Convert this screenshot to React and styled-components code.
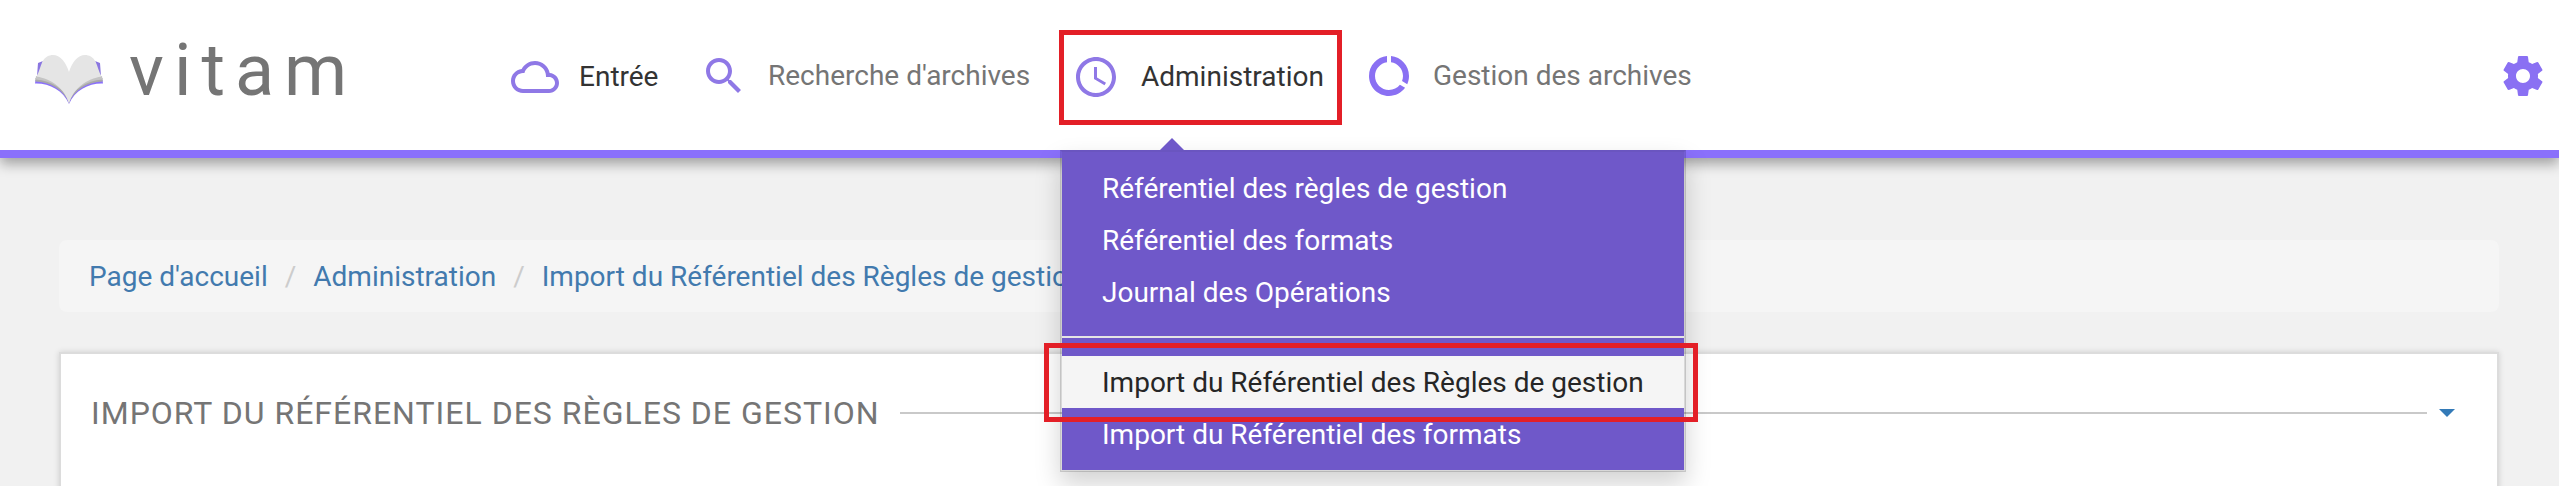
import React from "react";
import styled, { createGlobalStyle, css } from "styled-components";

const Global = createGlobalStyle`
  * { box-sizing: border-box; }
  html, body { height: 100%; }
  body {
    margin: 0;
    background: #f1f1f1;
    font-family: Roboto, "Liberation Sans", sans-serif;
    font-size: 28px;
    line-height: 40px;
    color: #757575;
    overflow: hidden;
  }
`;

const Page = styled.div`
  height: 486px;
  overflow: hidden;
`;

const Header = styled.header`
  position: relative;
  z-index: 2;
  display: flex;
  align-items: flex-start;
  height: 158px;
  background: #fff;
  border-bottom: 8px solid #8a70fb;
  box-shadow: 0 6px 12px rgba(0, 0, 0, 0.33);
`;

const Brand = styled.a`
  display: flex;
  align-items: flex-start;
  width: 511px;
  padding: 29px 0 0 35px;
`;

const Mark = styled.svg`
  width: 68px;
  height: 50px;
  margin-top: 25px;
`;

const Wordmark = styled.span`
  margin-left: 26px;
  font-size: 72px;
  line-height: 84px;
  letter-spacing: 10px;
  color: #757575;
`;

const Nav = styled.nav`
  display: flex;
  flex: 1;
  align-items: flex-start;
`;

const Entry = styled.div`
  position: relative;
  display: flex;
  align-items: center;
  height: 48px;
  margin-top: ${(p) => (p.$active ? 53 : 52)}px;
  margin-right: ${(p) => p.$after}px;
  color: ${(p) => (p.$active ? "#333" : "#757575")};
`;

const Icon = styled.svg`
  flex: none;
  width: 48px;
  height: 48px;
  fill: ${(p) => (p.$soft ? "#8f78e6" : "#8a70f3")};
`;

const Label = styled.span`
  margin-left: ${(p) => p.$gap || 20}px;
  width: ${(p) => p.$width}px;
  white-space: nowrap;
`;

const Settings = styled.button`
  display: flex;
  margin: 52px 12px 0 auto;
  padding: 0;
  border: 0;
  background: none;
`;

const Menu = styled.ul`
  position: absolute;
  top: 97px;
  left: -12px;
  width: 626px;
  margin: 0;
  padding: 10px 0;
  list-style: none;
  background: #6f58c9;
  background-clip: padding-box;
  border: 2px solid rgba(0, 0, 0, 0.15);
  border-top-color: #6a55c0;
  box-shadow: 0 12px 24px rgba(0, 0, 0, 0.175);

  &::before {
    content: "";
    position: absolute;
    top: -14px;
    left: 98px;
    border: 12px solid transparent;
    border-top: 0;
    border-bottom-color: #6f58c9;
  }
`;

const MenuItem = styled.li`
  padding: 7px 40px 5px;
  white-space: nowrap;
  color: #fff;
  ${(p) =>
    p.$hover &&
    css`
      background: #f5f5f5;
      color: #262626;
    `}
`;

const Divider = styled.li`
  height: 2px;
  margin: 18px 0;
  background: #e5e5e5;
`;

const Frame = styled.div`
  position: absolute;
  z-index: 3;
  top: ${(p) => p.$top}px;
  left: ${(p) => p.$left}px;
  width: ${(p) => p.$width}px;
  height: ${(p) => p.$height}px;
  border: 5px solid #e31f27;
`;

const Main = styled.main`
  padding: 82px 60px 0 59px;
`;

const Crumbs = styled.ol`
  display: flex;
  height: 72px;
  margin: 0 0 40px;
  padding: 17px 30px 15px;
  list-style: none;
  background: #f5f5f5;
  border-radius: 8px;
`;

const Crumb = styled.li`
  color: #427aae;
  white-space: nowrap;
  & + &::before {
    content: "/";
    padding: 0 17px;
    color: #ccc;
  }
`;

const Panel = styled.section`
  height: 200px;
  padding: 39px 30px;
  background: #fff;
  border: 2px solid #dcdcdc;
  box-shadow: 0 0 6px rgba(0, 0, 0, 0.14);
`;

const PanelHead = styled.div`
  display: flex;
  align-items: center;
`;

const Title = styled.h2`
  margin: 0;
  width: 809px;
  padding-top: 1px;
  line-height: 39px;
  font-size: 32px;
  font-weight: 400;
  letter-spacing: 1px;
  white-space: nowrap;
`;

const Rule = styled.hr`
  flex: 1;
  height: 2px;
  margin: 0 12px 0 0;
  border: 0;
  background: #c9c9c9;
`;

const Caret = styled.span`
  margin-right: 12px;
  border: 8px solid transparent;
  border-top-color: #337ab7;
  border-bottom: 0;
`;

const GLYPHS = {
  cloud:
    "M19.35 10.04C18.67 6.59 15.64 4 12 4 9.11 4 6.6 5.64 5.35 8.04 2.34 8.36 0 10.91 0 14c0 3.31 2.69 6 6 6h13c2.76 0 5-2.24 5-5 0-2.64-2.05-4.78-4.65-4.96zM19 18H6c-2.21 0-4-1.79-4-4s1.79-4 4-4h.71C7.37 7.69 9.48 6 12 6c3.04 0 5.5 2.46 5.5 5.5v.5H19c1.66 0 3 1.34 3 3s-1.34 3-3 3z",
  search:
    "M15.5 14h-.79l-.28-.27C15.41 12.59 16 11.11 16 9.5 16 5.91 13.09 3 9.5 3S3 5.91 3 9.5 5.91 16 9.5 16c1.61 0 3.09-.59 4.23-1.57l.27.28v.79l5 4.99L20.49 19l-4.99-5zm-6 0C7.01 14 5 11.99 5 9.5S7.01 5 9.5 5 14 7.01 14 9.5 11.99 14 9.5 14z",
  clock:
    "M11.99 2C6.47 2 2 6.48 2 12s4.47 10 9.99 10C17.52 22 22 17.52 22 12S17.52 2 11.99 2zM12 20c-4.42 0-8-3.58-8-8s3.58-8 8-8 8 3.58 8 8-3.58 8-8 8zm.5-13H11v6l5.25 3.15.75-1.23-4.5-2.67z",
  usage:
    "M13 2.05v3.03c3.39.49 6 3.39 6 6.92 0 .9-.18 1.75-.48 2.54l2.6 1.53c.56-1.24.88-2.62.88-4.07 0-5.18-3.95-9.45-9-9.95zM12 19c-3.87 0-7-3.13-7-7 0-3.53 2.61-6.43 6-6.92V2.05c-5.06.5-9 4.76-9 9.95 0 5.52 4.47 10 9.99 10 3.31 0 6.24-1.61 8.06-4.09l-2.6-1.53C16.17 17.98 14.21 19 12 19z",
  gear:
    "M19.43 12.98c.04-.32.07-.64.07-.98s-.03-.66-.07-.98l2.11-1.65c.19-.15.24-.42.12-.64l-2-3.46c-.12-.22-.39-.3-.61-.22l-2.49 1c-.52-.4-1.08-.73-1.69-.98l-.38-2.65C14.46 2.18 14.25 2 14 2h-4c-.25 0-.46.18-.49.42l-.38 2.65c-.61.25-1.17.59-1.69.98l-2.49-1c-.23-.09-.49 0-.61.22l-2 3.46c-.13.22-.07.49.12.64l2.11 1.65c-.04.32-.07.65-.07.98s.03.66.07.98l-2.11 1.65c-.19.15-.24.42-.12.64l2 3.46c.12.22.39.3.61.22l2.49-1c.52.4 1.08.73 1.69.98l.38 2.65c.03.24.24.42.49.42h4c.25 0 .46-.18.49-.42l.38-2.65c.61-.25 1.17-.59 1.69-.98l2.49 1c.23.09.49 0 .61-.22l2-3.46c.12-.22.07-.49-.12-.64l-2.11-1.65zM12 15.5c-1.93 0-3.5-1.57-3.5-3.5s1.57-3.5 3.5-3.5 3.5 1.57 3.5 3.5-1.57 3.5-3.5 3.5z",
};

function Glyph({ name, soft }) {
  return (
    <Icon viewBox="0 0 24 24" $soft={soft} aria-hidden="true">
      <path d={GLYPHS[name]} />
    </Icon>
  );
}

function BookMark() {
  return (
    <Mark viewBox="0 0 68 50" aria-hidden="true">
      <path fill="#8a76e0" d="M3 9L8 7 5 18 2 22zM65 9L60 7 63 18 66 22z" />
      <path fill="#8a70fb" d="M.5 26L0 29.500C14 29 28 36 34 50 40 36 54 29 68 29.500L67.500 26z" />
      <path fill="#a9a9a9" d="M.5 24L.3 27.500C15 28 29 36 34 49 39 36 53 28 67.700 27.500L67.500 24z" />
      <path fill="#c4c4c4" d="M1 22L.5 25.500C17 27 30 35 34 48 38 35 51 27 67.500 25.500L67 22z" />
      <path fill="#e5e5e5" d="M1.500 22.500C4 18 5.500 12 7.500 7.500 10 3 14 1 18 1 25 1 31 8 34 18 37 8 43 1 50 1 54 1 58 3 60.500 7.500 62.500 12 64 18 66.500 22.500 52 25 38 34 34 50 30 34 16 25 1.500 22.500z" />
    </Mark>
  );
}

export default function App() {
  return (
    <Page>
      <Global />
      <Header>
        <Brand>
          <BookMark />
          <Wordmark>vitam</Wordmark>
        </Brand>
        <Nav>
          <Entry $active $after={41}>
            <Glyph name="cloud" soft />
            <Label $width={80}>Entrée</Label>
          </Entry>
          <Entry $after={40}>
            <Glyph name="search" soft />
            <Label $width={264}>Recherche d'archives</Label>
          </Entry>
          <Entry $active $after={45}>
            <Glyph name="clock" soft />
            <Label $gap={21} $width={179}>Administration</Label>
            <Menu>
              <MenuItem>Référentiel des règles de gestion</MenuItem>
              <MenuItem>Référentiel des formats</MenuItem>
              <MenuItem>Journal des Opérations</MenuItem>
              <Divider />
              <MenuItem $hover>Import du Référentiel des Règles de gestion</MenuItem>
              <MenuItem>Import du Référentiel des formats</MenuItem>
            </Menu>
          </Entry>
          <Entry $after={0}>
            <Glyph name="usage" />
            <Label $width={264}>Gestion des archives</Label>
          </Entry>
          <Settings aria-label="Paramètres">
            <Glyph name="gear" />
          </Settings>
        </Nav>
        <Frame $left={1059} $top={30} $width={283} $height={95} />
        <Frame $left={1044} $top={343} $width={654} $height={79} />
      </Header>
      <Main>
        <Crumbs>
          <Crumb>Page d'accueil</Crumb>
          <Crumb>Administration</Crumb>
          <Crumb>Import du Référentiel des Règles de gestion</Crumb>
        </Crumbs>
        <Panel>
          <PanelHead>
            <Title>IMPORT DU RÉFÉRENTIEL DES RÈGLES DE GESTION</Title>
            <Rule />
            <Caret />
          </PanelHead>
        </Panel>
      </Main>
    </Page>
  );
}
